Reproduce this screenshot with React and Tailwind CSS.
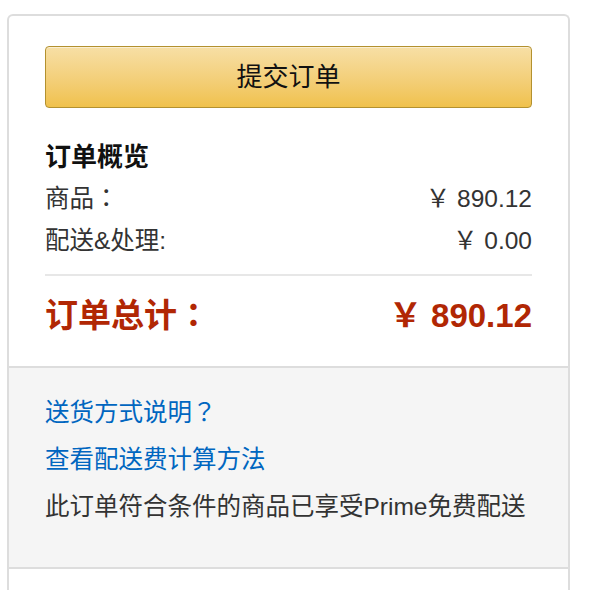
// Full-width punctuation set in a font that centres it in the em box
function Punct({ children }) {
  return <span className="font-['Noto_Sans_CJK_TC',sans-serif] leading-none">{children}</span>;
}

export default function App() {
  return (
    <div className="min-h-[590px] bg-white pl-[7px] pt-[14px] font-['Liberation_Sans','Noto_Sans_CJK_SC',sans-serif]">
      <div className="w-[563px] min-h-[580px] rounded-t-[6px] border-2 border-b-0 border-[#dddddd] bg-white">
        {/* order summary */}
        <div className="px-[36px] pt-[30px] pb-[25px]">
          <button
            type="button"
            className="flex h-[62px] w-full items-center justify-center rounded-[4px] border border-[#b3912f] bg-gradient-to-b from-[#f7dfa5] to-[#f0c14b] text-[26px] leading-none text-[#111111] shadow-[inset_0_1px_0_rgba(255,255,255,0.5)]"
          >
            提交订单
          </button>

          <h3 className="mt-[28px] text-[26px] font-bold leading-[42px] text-[#111111]">订单概览</h3>

          <div className="flex h-[42px] items-center justify-between text-[24.5px] leading-[42px] text-[#333333]">
            <span>
              商品<Punct>：</Punct>
            </span>
            <span>￥ 890.12</span>
          </div>
          <div className="flex h-[42px] items-center justify-between text-[24.5px] leading-[42px] text-[#333333]">
            <span>配送&amp;处理:</span>
            <span>￥ 0.00</span>
          </div>

          <div className="mt-[12px] h-[2px] bg-[#e7e7e7]" />

          <div className="mt-[15px] flex h-[50px] items-center justify-between text-[33px] font-bold leading-[50px] text-[#b12704]">
            <span>
              订单总计<Punct>：</Punct>
            </span>
            <span>￥ 890.12</span>
          </div>
        </div>

        {/* shipping notes */}
        <div className="border-y-2 border-[#dddddd] bg-[#f5f5f5] px-[36px] pt-[21px] pb-[37px] text-[24.5px] leading-[47px]">
          <a href="#" className="block h-[47px] text-[#0066c0]">
            送货方式说明<Punct>？</Punct>
          </a>
          <a href="#" className="block h-[47px] text-[#0066c0]">查看配送费计算方法</a>
          <p className="h-[47px] text-[#333333]">此订单符合条件的商品已享受Prime免费配送</p>
        </div>
      </div>
    </div>
  );
}
